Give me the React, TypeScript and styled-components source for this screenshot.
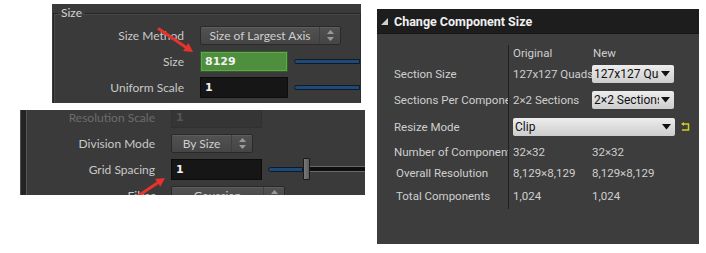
import React from "react";
import styled, { createGlobalStyle } from "styled-components";

const Global = createGlobalStyle`
  html, body { margin: 0; padding: 0; background: #ffffff; }
  body { width: 706px; height: 253px; overflow: hidden; }
`;

const Page = styled.div`
  display: flex;
  align-items: flex-start;
  width: 706px;
  height: 253px;
`;

const LeftColumn = styled.div`
  display: flex;
  flex-direction: column;
  width: 365px;
`;

/* ---------- Houdini style panels ---------- */

const HPanel = styled.div<{ $ml: number; $mt: number; $w: number; $h: number; $pt?: number }>`
  position: relative;
  box-sizing: border-box;
  margin-left: ${(p) => p.$ml}px;
  margin-top: ${(p) => p.$mt}px;
  padding-top: ${(p) => p.$pt ?? 0}px;
  width: ${(p) => p.$w}px;
  height: ${(p) => p.$h}px;
  background: #3a3a3a;
  overflow: hidden;
  font-family: Lato, "Open Sans", sans-serif;
  font-size: 12px;
  color: #c9c9c9;
`;

const GroupFrame = styled.fieldset`
  margin: 0 0 0 1px;
  padding: 0;
  border: 0;
  border-top: 1px solid #242424;
  border-left: 1px solid #242424;
  border-right: 1px solid #2c2c2c;
  box-shadow: inset 1px 1px 0 #484848;
  height: 100%;
  box-sizing: border-box;
  min-width: 0;
`;

const Legend = styled.legend`
  padding: 0 3px;
  margin-left: 4px;
  color: #d2d2d2;
  font-size: 12px;
  line-height: 12px;
`;

const HRows = styled.div<{ $labelW: number; $offset: number }>`
  display: grid;
  grid-template-columns: ${(p) => p.$labelW}px 1fr;
  column-gap: 16px;
  row-gap: 0;
  margin-top: ${(p) => p.$offset}px;
`;

const HLabel = styled.div<{ $faded?: boolean }>`
  height: 26px;
  display: flex;
  align-items: center;
  justify-content: flex-end;
  color: ${(p) => (p.$faded ? "#6c6c6c" : "#c9c9c9")};
  white-space: nowrap;
`;

const HControl = styled.div`
  height: 26px;
  display: flex;
  align-items: center;
  gap: 6px;
  min-width: 0;
`;

const HField = styled.div<{ $w: number; $variant?: "green" | "dark" | "faded" }>`
  box-sizing: border-box;
  width: ${(p) => p.$w}px;
  height: 21px;
  flex: none;
  display: flex;
  align-items: center;
  padding-left: 4px;
  font-family: "DejaVu Sans", sans-serif;
  font-weight: bold;
  font-size: 11px;
  color: ${(p) => (p.$variant === "faded" ? "#555" : "#f2f2f2")};
  background: ${(p) =>
    p.$variant === "green" ? "#4d8f3d" : p.$variant === "faded" ? "#353535" : "#161616"};
  border: 1px solid
    ${(p) => (p.$variant === "green" ? "#2f5e25" : p.$variant === "faded" ? "#303030" : "#0c0c0c")};
  box-shadow: ${(p) => (p.$variant === "green" ? "inset 0 0 0 1px #63a650" : "none")};
`;

const HMenu = styled.div<{ $w: number }>`
  box-sizing: border-box;
  width: ${(p) => p.$w}px;
  height: 19px;
  flex: none;
  display: flex;
  align-items: center;
  border: 1px solid #2a2a2a;
  border-radius: 2px;
  background: linear-gradient(#525252, #454545);
  box-shadow: inset 0 1px 0 #5c5c5c;
  color: #cfcfcf;
`;

const HMenuText = styled.span`
  flex: 1;
  text-align: center;
  white-space: nowrap;
  overflow: hidden;
`;

const HSpinner = styled.span`
  width: 20px;
  height: 100%;
  display: flex;
  align-items: center;
  justify-content: center;
  border-left: 1px solid #3e3e3e;
`;

const BlueTrack = styled.div<{ $w?: number }>`
  box-sizing: border-box;
  height: 5px;
  ${(p) => (p.$w ? `width: ${p.$w}px; flex: none;` : "flex: 1;")}
  background: #1f4a78;
  border: 1px solid #0e1a28;
  border-radius: 3px 0 0 3px;
`;

const GrayTrack = styled.div`
  flex: 1;
  box-sizing: border-box;
  height: 6px;
  background: #0e0e0e;
  border-top: 1px solid #6a6a6a;
  border-bottom: 1px solid #6a6a6a;
`;

const SliderHandle = styled.div`
  box-sizing: border-box;
  width: 7px;
  height: 22px;
  flex: none;
  background: linear-gradient(90deg, #7a7a7a, #5c5c5c);
  border: 1px solid #1a1a1a;
  border-radius: 1px;
`;

const SliderBox = styled.div`
  flex: 1;
  display: flex;
  align-items: center;
  min-width: 0;
`;

const SideRail = styled.div`
  display: flex;
  height: 100%;
`;

const RailStrip = styled.div`
  width: 5px;
  background: #242424;
  border-left: 1px solid #4f4f4f;
  border-right: 1px solid #565656;
  flex: none;
`;

const Panel2Body = styled.div`
  flex: 1;
  min-width: 0;
`;

const Annotation = styled.svg`
  position: absolute;
  left: 0;
  top: 0;
  pointer-events: none;
`;

const Spinner = () => (
  <HSpinner>
    <svg width="7" height="11" viewBox="0 0 7 11">
      <path d="M3.5 0 L7 4 L0 4 Z" fill="#9a9a9a" />
      <path d="M3.5 11 L7 7 L0 7 Z" fill="#9a9a9a" />
    </svg>
  </HSpinner>
);

const RedArrow = ({ x1, y1, x2, y2, w, h }: { x1: number; y1: number; x2: number; y2: number; w: number; h: number }) => {
  const ang = Math.atan2(y2 - y1, x2 - x1);
  const len = 10;
  const spread = 0.5;
  const ax = x2 - len * Math.cos(ang - spread);
  const ay = y2 - len * Math.sin(ang - spread);
  const bx = x2 - len * Math.cos(ang + spread);
  const by = y2 - len * Math.sin(ang + spread);
  const mx = x2 - 6 * Math.cos(ang);
  const my = y2 - 6 * Math.sin(ang);
  return (
    <Annotation width={w} height={h} viewBox={`0 0 ${w} ${h}`}>
      <line x1={x1} y1={y1} x2={mx} y2={my} stroke="#e8322a" strokeWidth="3" strokeLinecap="round" />
      <path d={`M${x2} ${y2} L${ax} ${ay} L${bx} ${by} Z`} fill="#e8322a" />
    </Annotation>
  );
};

/* ---------- Unreal style panel ---------- */

const UPanel = styled.div`
  margin-left: 12px;
  margin-top: 9px;
  width: 322px;
  height: 235px;
  background: #3d3d3d;
  font-family: Roboto, "Liberation Sans", sans-serif;
  font-size: 11.5px;
  color: #cfcfcf;
  display: flex;
  flex-direction: column;
`;

const UHeader = styled.div`
  height: 24px;
  flex: none;
  background: #1d1d1d;
  display: flex;
  align-items: center;
  gap: 6px;
  padding-left: 4px;
  color: #f0f0f0;
  font-weight: bold;
  font-size: 12.5px;
  border-bottom: 1px solid #161616;
`;

const UGrid = styled.div`
  display: grid;
  grid-template-columns: 136px 79px 1fr;
  grid-template-rows: 16px 26px 26px 28px 22px 20px 26px;
  padding-top: 11px;
`;

const UCell = styled.div<{ $divider?: boolean; $indent?: number }>`
  display: flex;
  align-items: center;
  white-space: nowrap;
  overflow: hidden;
  min-width: 0;
  padding-left: ${(p) => p.$indent ?? 0}px;
  box-sizing: border-box;
  ${(p) => (p.$divider ? "border-right: 1px solid #202020; margin-right: 4px;" : "")}
`;

const UWideCell = styled(UCell)`
  grid-column: 2 / span 2;
  gap: 6px;
`;

const UCombo = styled.div<{ $w: number }>`
  box-sizing: border-box;
  width: ${(p) => p.$w}px;
  height: 18px;
  flex: none;
  display: flex;
  align-items: center;
  gap: 2px;
  padding: 0 4px 0 2px;
  background: linear-gradient(#ededed, #cdcdcd);
  border-radius: 2px;
  color: #111;
  font-size: 12px;
`;

const UComboText = styled.span`
  flex: 1;
  overflow: hidden;
  white-space: nowrap;
`;

const Caret = () => (
  <svg width="9" height="6" viewBox="0 0 9 6">
    <path d="M0 0 L9 0 L4.5 5.5 Z" fill="#111" />
  </svg>
);

const Combo = ({ w, text }: { w: number; text: string }) => (
  <UCombo $w={w}>
    <UComboText>{text}</UComboText>
    <Caret />
  </UCombo>
);

const ResetIcon = () => (
  <svg width="9" height="10" viewBox="0 0 9 10">
    <path d="M2.5 2 H7.5 V8 H1" fill="none" stroke="#d2cf1c" strokeWidth="1.5" />
    <path d="M0 2 L3 0 L3 4 Z" fill="#d2cf1c" />
  </svg>
);

export default function App() {
  return (
    <>
      <Global />
      <Page>
        <LeftColumn>
          <HPanel $ml={52} $mt={4} $w={309} $h={99} $pt={3}>
            <GroupFrame>
              <Legend>Size</Legend>
              <HRows $labelW={130} $offset={3}>
                <HLabel>Size Method</HLabel>
                <HControl>
                  <HMenu $w={141}>
                    <HMenuText>Size of Largest Axis</HMenuText>
                    <Spinner />
                  </HMenu>
                </HControl>
                <HLabel>Size</HLabel>
                <HControl>
                  <HField $w={88} $variant="green">8129</HField>
                  <BlueTrack />
                </HControl>
                <HLabel>Uniform Scale</HLabel>
                <HControl>
                  <HField $w={88} $variant="dark">1</HField>
                  <BlueTrack />
                </HControl>
              </HRows>
            </GroupFrame>
            <RedArrow x1={107} y1={25} x2={141} y2={48} w={160} h={70} />
          </HPanel>

          <HPanel $ml={20} $mt={7} $w={345} $h={85}>
            <SideRail>
              <RailStrip />
              <Panel2Body>
                <HRows $labelW={128} $offset={-6}>
                  <HLabel $faded>Resolution Scale</HLabel>
                  <HControl>
                    <HField $w={91} $variant="faded">1</HField>
                  </HControl>
                  <HLabel>Division Mode</HLabel>
                  <HControl>
                    <HMenu $w={82}>
                      <HMenuText>By Size</HMenuText>
                      <Spinner />
                    </HMenu>
                  </HControl>
                  <HLabel>Grid Spacing</HLabel>
                  <HControl>
                    <HField $w={91} $variant="dark">1</HField>
                    <SliderBox>
                      <BlueTrack $w={35} />
                      <SliderHandle />
                      <GrayTrack />
                    </SliderBox>
                  </HControl>
                  <HLabel>Filter</HLabel>
                  <HControl>
                    <HMenu $w={114}>
                      <HMenuText>Gaussian</HMenuText>
                      <Spinner />
                    </HMenu>
                  </HControl>
                </HRows>
              </Panel2Body>
            </SideRail>
            <RedArrow x1={118} y1={86} x2={145} y2={68} w={170} h={85} />
          </HPanel>
        </LeftColumn>

        <UPanel>
          <UHeader>
            <svg width="7" height="7" viewBox="0 0 7 7">
              <path d="M7 0 L7 7 L0 7 Z" fill="#cfcfcf" />
            </svg>
            Change Component Size
          </UHeader>
          <UGrid>
            <UCell $divider />
            <UCell>Original</UCell>
            <UCell $indent={1}>New</UCell>

            <UCell $divider $indent={17}>Section Size</UCell>
            <UCell>127x127 Quads</UCell>
            <UCell>
              <Combo w={82} text="127x127 Quads" />
            </UCell>

            <UCell $divider $indent={17}>Sections Per Component</UCell>
            <UCell>2×2 Sections</UCell>
            <UCell>
              <Combo w={82} text="2×2 Sections" />
            </UCell>

            <UCell $divider $indent={17}>Resize Mode</UCell>
            <UWideCell>
              <Combo w={162} text="Clip" />
              <ResetIcon />
            </UWideCell>

            <UCell $divider $indent={17}>Number of Components</UCell>
            <UCell>32×32</UCell>
            <UCell>32×32</UCell>

            <UCell $divider $indent={19}>Overall Resolution</UCell>
            <UCell>8,129×8,129</UCell>
            <UCell>8,129×8,129</UCell>

            <UCell $divider $indent={19}>Total Components</UCell>
            <UCell>1,024</UCell>
            <UCell>1,024</UCell>
          </UGrid>
        </UPanel>
      </Page>
    </>
  );
}
